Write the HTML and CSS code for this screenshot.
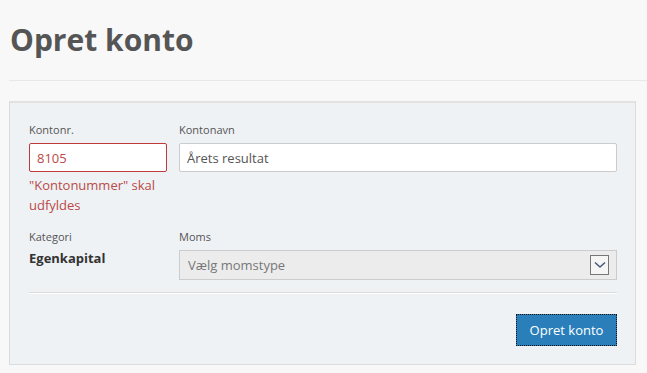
FILE: index.html
```html
<!DOCTYPE html>
<html>
<head>
<meta charset="utf-8">
<link rel="stylesheet" href="styles.css">
</head>
<body>
<div class="page">
  <h1 class="title">Opret konto</h1>
  <div class="rule"></div>
  <form class="panel">
    <div class="row">
      <div class="col col-small">
        <label class="lbl">Kontonr.</label>
        <input class="field field-error" type="text" value="8105">
        <div class="err">"Kontonummer" skal udfyldes</div>
      </div>
      <div class="col col-wide">
        <label class="lbl">Kontonavn</label>
        <input class="field" type="text" value="Årets resultat">
      </div>
    </div>
    <div class="row row2">
      <div class="col col-small">
        <label class="lbl">Kategori</label>
        <div class="static">Egenkapital</div>
      </div>
      <div class="col col-wide">
        <label class="lbl">Moms</label>
        <div class="select">
          <span class="select-text">Vælg momstype</span>
          <span class="select-arrow">
            <svg width="12" height="8" viewBox="0 0 12 8"><path d="M1 1.5 L6 6 L11 1.5" fill="none" stroke="#4a5d7a" stroke-width="1.6"/></svg>
          </span>
        </div>
      </div>
    </div>
    <div class="divider"></div>
    <div class="actions">
      <button class="btn" type="button">Opret konto</button>
    </div>
  </form>
</div>
</body>
</html>
```

FILE: styles.css
```css
html, body {
  margin: 0;
  padding: 0;
  background: #f8f8f8;
  font-family: "Open Sans", "DejaVu Sans", sans-serif;
  color: #555;
}
.page {
  padding: 0 11px 0 9px;
}
.title {
  margin: 0;
  padding: 18px 0 0 1px;
  font-size: 30px;
  line-height: 44px;
  font-weight: 700;
  color: #555;
  height: 62px;
}
.rule {
  height: 1px;
  background: #e8e8e8;
  margin-right: -11px;
}
.panel {
  margin-top: 20px;
  border: 1px solid #dcdcdc;
  border-top: 2px solid #e2e2e2;
  background: #eff2f5;
  padding: 19px 18px 17px 19px;
  box-sizing: border-box;
  height: 264px;
}
.row {
  display: flex;
  gap: 12px;
}
.row2 {
  margin-top: 14px;
}
.col {
  display: flex;
  flex-direction: column;
}
.col-small {
  width: 138px;
}
.col-wide {
  flex: 1;
}
.lbl {
  font-size: 11px;
  line-height: 16px;
  color: #555;
  margin-bottom: 5px;
}
.field {
  box-sizing: border-box;
  height: 29px;
  border: 1px solid #ccc;
  border-radius: 2px;
  background: #fff;
  font-family: "Open Sans", sans-serif;
  font-size: 13px;
  color: #555;
  padding: 0 7px;
  margin: 0;
  outline: none;
}
.field-error {
  border-color: #c0393b;
  color: #b94a48;
}
.err {
  margin-top: 3px;
  font-size: 13px;
  line-height: 20px;
  color: #b94a48;
}
.static {
  margin-top: -2px;
  font-size: 13px;
  font-weight: 700;
  color: #333;
  line-height: 20px;
}
.select {
  box-sizing: border-box;
  height: 30px;
  border: 1px solid #ccc;
  background: #ececec;
  display: flex;
  align-items: center;
  justify-content: space-between;
  padding: 0 7px 0 8px;
}
.select-text {
  font-size: 13px;
  color: #777;
}
.select-arrow {
  box-sizing: border-box;
  width: 19px;
  height: 20px;
  border: 1px solid #777;
  display: flex;
  align-items: center;
  justify-content: center;
  background: #f5f5f5;
}
.divider {
  margin-top: 12px;
  height: 1px;
  background: #dcdcdc;
  border-bottom: 1px solid #fff;
}
.actions {
  display: flex;
  justify-content: flex-end;
  margin-top: 20px;
}
.btn {
  width: 101px;
  height: 32px;
  background: #2a7fba;
  color: #fff;
  border: 1px dotted #111;
  font-family: "Open Sans", sans-serif;
  font-size: 13px;
  padding: 0;
}
```
